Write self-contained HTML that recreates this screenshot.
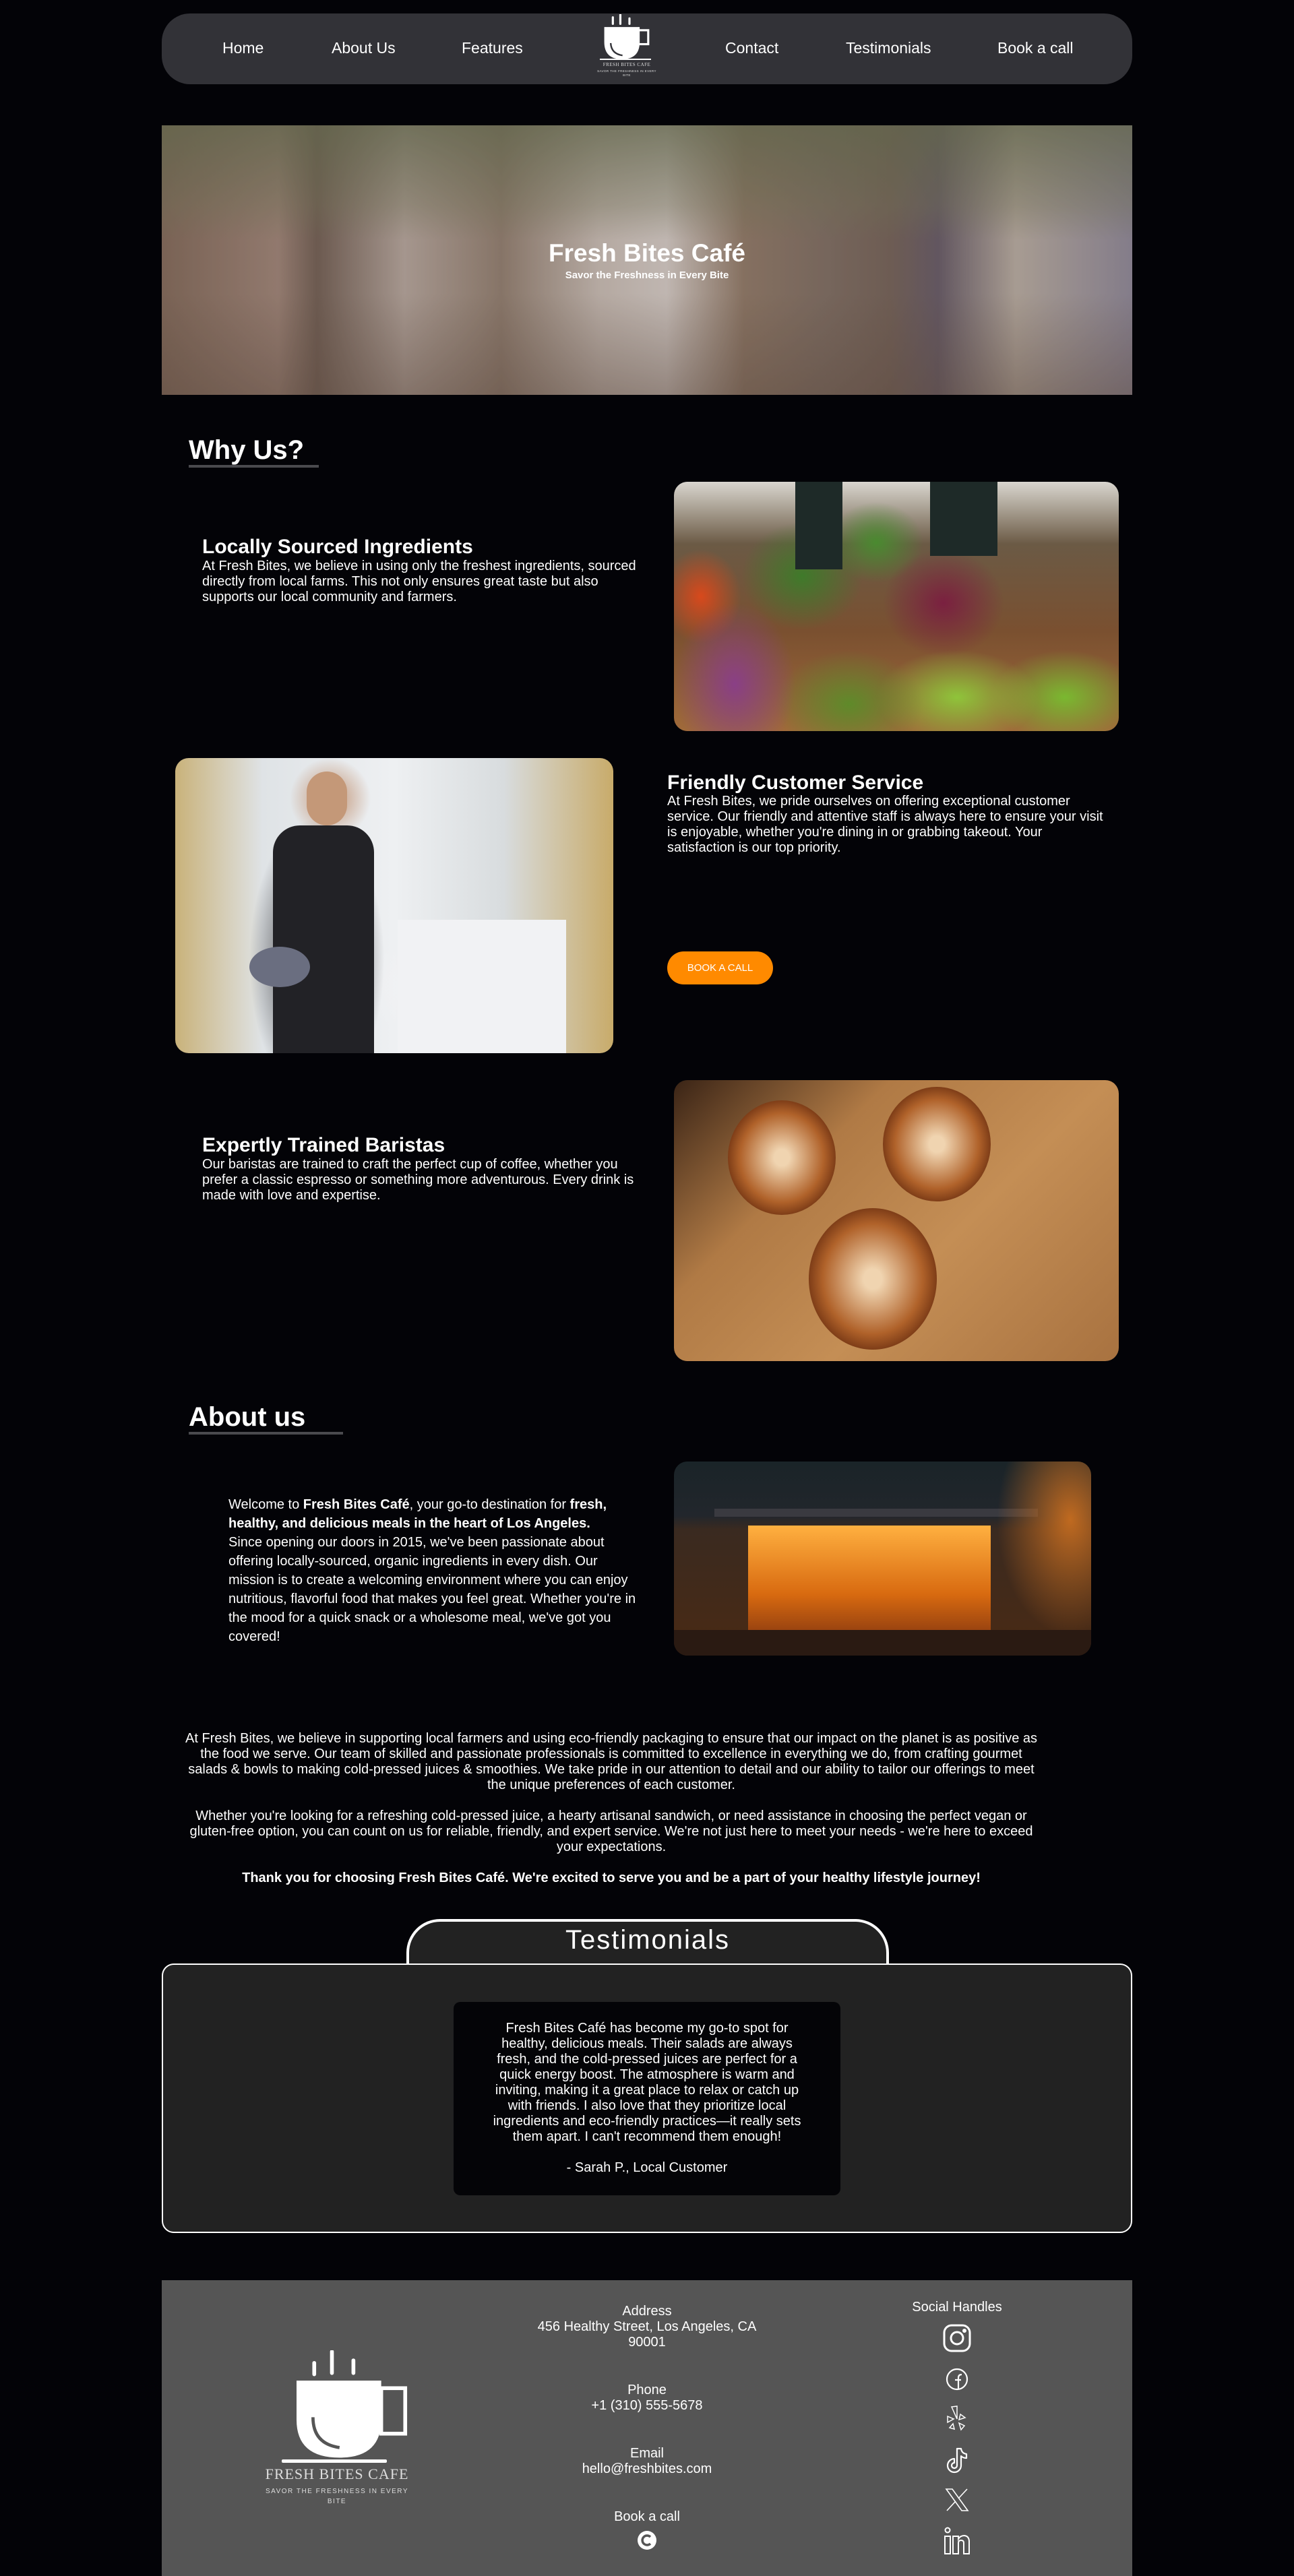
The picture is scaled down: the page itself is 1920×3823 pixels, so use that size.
<!DOCTYPE html>
<html><head><meta charset="utf-8">
<style>
*{margin:0;padding:0;box-sizing:border-box}
body{width:1920px;height:3823px;background:#030307;font-family:"Liberation Sans",Arial,sans-serif;color:#fff;position:relative;overflow:hidden}
.a{position:absolute}
.nav{left:240px;top:20px;width:1440px;height:105px;background:#323237;border-radius:42px}
.nl{position:absolute;top:56px;font-size:23px;line-height:30px;color:#fff}
h2.sec{position:absolute;left:280px;font-size:40px;font-weight:bold;line-height:46px}
.ul{position:absolute;left:280px;height:4px;background:#4a4a4e}
.ft{position:absolute;font-size:30px;font-weight:bold;line-height:36px}
.fp{position:absolute;font-size:20px;line-height:23px;width:700px;white-space:nowrap}
.img{position:absolute;border-radius:20px;overflow:hidden}
.c{text-align:center}
</style></head><body>

<!-- NAV -->
<div class="a nav">
  <span class="nl" style="left:90px;top:36px">Home</span>
  <span class="nl" style="left:252px;top:36px">About Us</span>
  <span class="nl" style="left:445px;top:36px">Features</span>
  <span class="nl" style="left:836px;top:36px">Contact</span>
  <span class="nl" style="left:1015px;top:36px">Testimonials</span>
  <span class="nl" style="left:1240px;top:36px">Book a call</span>
</div>
<svg class="a" style="left:890px;top:21px" width="80" height="70" viewBox="0 0 100 88">
  <g stroke="#fff" stroke-width="4" stroke-linecap="round" fill="none"><line x1="24" y1="6" x2="24" y2="18"/><line x1="38" y1="1" x2="38" y2="18"/><line x1="55" y1="8" x2="55" y2="18"/><rect x="72" y="30" width="18" height="26"/></g>
  <path d="M8 24 H74 V52 Q74 84 41 84 Q8 84 8 52 Z" fill="#fff"/>
  <path d="M20 54 Q21 74 42 77" stroke="#323237" stroke-width="3" fill="none"/>
</svg>
<div class="a" style="left:890px;top:87px;width:76px;height:2px;background:#fff"></div>
<div class="a c" style="left:870px;top:92px;width:120px;font-family:'Liberation Serif',serif;font-size:7px;color:#ddd;letter-spacing:.5px">FRESH BITES CAFE</div>
<div class="a c" style="left:885px;top:103px;width:90px;font-size:4.5px;color:#ddd;letter-spacing:.4px;line-height:6px">SAVOR THE FRESHNESS IN EVERY BITE</div>

<!-- HERO -->
<div class="a" style="left:240px;top:186px;width:1440px;height:400px;overflow:hidden;background:linear-gradient(90deg,#7d6552 0%,#9c8272 12%,#6c5a4c 16%,#b5a79b 25%,#8e7c6a 35%,#c9bfb4 45%,#d7d0c8 52%,#8c7660 60%,#7a6a5c 68%,#6e5d50 75%,#5f5560 80%,#b8aea0 88%,#8a8696 100%)">
  <div class="a" style="left:0;top:0;width:1440px;height:170px;background:linear-gradient(180deg,rgba(95,105,70,.75),rgba(110,115,80,.35) 70%,rgba(0,0,0,0))"></div>
  <div class="a" style="left:0;top:250px;width:1440px;height:150px;background:linear-gradient(180deg,rgba(0,0,0,0),rgba(90,70,55,.45))"></div>
  <div class="a" style="left:0;top:0;width:1440px;height:400px;background:rgba(110,90,95,.22)"></div>
  <div class="a c" style="left:0;top:168px;width:1440px;font-size:37px;font-weight:bold;line-height:44px">Fresh Bites Café</div>
  <div class="a c" style="left:0;top:213px;width:1440px;font-size:15px;font-weight:bold;line-height:20px">Savor the Freshness in Every Bite</div>
</div>

<!-- WHY US -->
<h2 class="sec" style="top:645px">Why Us?</h2>
<div class="ul" style="top:690px;width:193px"></div>

<div class="ft" style="left:300px;top:794px">Locally Sourced Ingredients</div>
<div class="fp" style="left:300px;top:829px">At Fresh Bites, we believe in using only the freshest ingredients, sourced<br>directly from local farms. This not only ensures great taste but also<br>supports our local community and farmers.</div>
<div class="img" style="left:1000px;top:715px;width:660px;height:370px;background:
radial-gradient(ellipse 90px 120px at 90px 300px,#8a3f86,transparent),
radial-gradient(ellipse 110px 80px at 260px 330px,#5f8a2a,transparent),
radial-gradient(ellipse 120px 70px at 420px 320px,#8fc43a,transparent),
radial-gradient(ellipse 110px 70px at 580px 320px,#7ab830,transparent),
radial-gradient(ellipse 90px 80px at 400px 180px,#7a2040,transparent),
radial-gradient(ellipse 60px 70px at 40px 170px,#d8491c,transparent),
radial-gradient(ellipse 90px 80px at 190px 140px,#3f7a2a,transparent),
radial-gradient(ellipse 70px 60px at 300px 90px,#4a8a30,transparent),
linear-gradient(180deg,#d9d6cf 0%,#6b5a45 25%,#7a5030 60%,#a06a3a 100%)">
  <div class="a" style="left:180px;top:0;width:70px;height:130px;background:#1e2a28"></div>
  <div class="a" style="left:380px;top:0;width:100px;height:110px;background:#1e2a28"></div>
</div>

<div class="img" style="left:260px;top:1125px;width:650px;height:438px;background:
radial-gradient(ellipse 100px 210px at 210px 300px,#1a1a1e,transparent),
radial-gradient(ellipse 120px 80px at 400px 340px,#f4f4f6,transparent),
radial-gradient(ellipse 60px 60px at 230px 60px,#c09070,transparent),
linear-gradient(90deg,#c9b27a 0%,#dfe3e6 20%,#eef0f2 50%,#d8dcde 75%,#c8ab6a 100%)">
  <div class="a" style="left:145px;top:100px;width:150px;height:338px;background:#222226;border-radius:40px 40px 0 0"></div>
  <div class="a" style="left:195px;top:20px;width:60px;height:80px;background:#c49878;border-radius:30px"></div>
  <div class="a" style="left:110px;top:280px;width:90px;height:60px;background:#6a6e80;border-radius:50%"></div>
  <div class="a" style="left:330px;top:240px;width:250px;height:200px;background:#f1f2f4"></div>
</div>
<div class="ft" style="left:990px;top:1144px">Friendly Customer Service</div>
<div class="fp" style="left:990px;top:1178px">At Fresh Bites, we pride ourselves on offering exceptional customer<br>service. Our friendly and attentive staff is always here to ensure your visit<br>is enjoyable, whether you're dining in or grabbing takeout. Your<br>satisfaction is our top priority.</div>
<div class="a c" style="left:990px;top:1412px;width:157px;height:49px;background:#ff8a00;border-radius:25px;font-size:15px;line-height:49px">BOOK A CALL</div>

<div class="ft" style="left:300px;top:1682px">Expertly Trained Baristas</div>
<div class="fp" style="left:300px;top:1717px">Our baristas are trained to craft the perfect cup of coffee, whether you<br>prefer a classic espresso or something more adventurous. Every drink is<br>made with love and expertise.</div>
<div class="img" style="left:1000px;top:1603px;width:660px;height:417px;background:linear-gradient(135deg,#3a2416 0%,#b07a45 30%,#c48e55 60%,#a87240 100%)">
  <div class="a" style="left:80px;top:30px;width:160px;height:170px;border-radius:50%;background:radial-gradient(#f0d4b0 10%,#b0622a 55%,#7a3a16 72%,#f4f4f4 74%)"></div>
  <div class="a" style="left:310px;top:10px;width:160px;height:170px;border-radius:50%;background:radial-gradient(#f0d4b0 10%,#b0622a 55%,#7a3a16 72%,#f4f4f4 74%)"></div>
  <div class="a" style="left:200px;top:190px;width:190px;height:210px;border-radius:50%;background:radial-gradient(#f0d4b0 10%,#b0622a 55%,#7a3a16 72%,#f4f4f4 74%)"></div>
</div>

<!-- ABOUT -->
<h2 class="sec" style="top:2080px">About us</h2>
<div class="ul" style="top:2125px;width:229px"></div>
<div class="a" style="left:339px;top:2219px;width:700px;font-size:20px;line-height:28px;white-space:nowrap">Welcome to <b>Fresh Bites Café</b>, your go-to destination for <b>fresh,<br>healthy, and delicious meals in the heart of Los Angeles.</b><br>Since opening our doors in 2015, we've been passionate about<br>offering locally-sourced, organic ingredients in every dish. Our<br>mission is to create a welcoming environment where you can enjoy<br>nutritious, flavorful food that makes you feel great. Whether you're in<br>the mood for a quick snack or a wholesome meal, we've got you<br>covered!</div>
<div class="img" style="left:1000px;top:2169px;width:619px;height:288px;background:linear-gradient(180deg,#1a2428 0%,#22262c 28%,#3a2a20 35%,#4a2a14 100%)">
  <div class="a" style="left:110px;top:95px;width:360px;height:170px;background:linear-gradient(180deg,#ffb040,#d86a10 60%,#8a3a10)"></div>
  <div class="a" style="left:60px;top:70px;width:480px;height:12px;background:#3a3a40"></div>
  <div class="a" style="left:460px;top:0;width:160px;height:288px;background:radial-gradient(ellipse at 80% 30%,#c06a20,transparent 60%)"></div>
  <div class="a" style="left:0;top:250px;width:619px;height:38px;background:#2a1a12"></div>
</div>

<div class="a c" style="left:207px;top:2569px;width:1400px;font-size:20px;line-height:23px;white-space:nowrap">At Fresh Bites, we believe in supporting local farmers and using eco-friendly packaging to ensure that our impact on the planet is as positive as<br>the food we serve. Our team of skilled and passionate professionals is committed to excellence in everything we do, from crafting gourmet<br>salads &amp; bowls to making cold-pressed juices &amp; smoothies. We take pride in our attention to detail and our ability to tailor our offerings to meet<br>the unique preferences of each customer.<br><br>Whether you're looking for a refreshing cold-pressed juice, a hearty artisanal sandwich, or need assistance in choosing the perfect vegan or<br>gluten-free option, you can count on us for reliable, friendly, and expert service. We're not just here to meet your needs - we're here to exceed<br>your expectations.<br><br><b>Thank you for choosing Fresh Bites Café. We're excited to serve you and be a part of your healthy lifestyle journey!</b></div>

<!-- TESTIMONIALS -->
<div class="a" style="left:603px;top:2848px;width:716px;height:80px;background:#222;border:4px solid #fff;border-bottom:none;border-radius:50px 50px 0 0"></div>
<div class="a c" style="left:603px;top:2856px;width:716px;font-size:40px;line-height:46px;letter-spacing:2px">Testimonials</div>
<div class="a" style="left:240px;top:2914px;width:1440px;height:400px;background:#222;border:2px solid #fff;border-radius:18px"></div>
<div class="a c" style="left:673px;top:2971px;width:574px;height:287px;background:#040407;border-radius:10px;padding-top:28px;font-size:20px;line-height:23px;white-space:nowrap">Fresh Bites Café has become my go-to spot for<br>healthy, delicious meals. Their salads are always<br>fresh, and the cold-pressed juices are perfect for a<br>quick energy boost. The atmosphere is warm and<br>inviting, making it a great place to relax or catch up<br>with friends. I also love that they prioritize local<br>ingredients and eco-friendly practices—it really sets<br>them apart. I can't recommend them enough!<br><br>- Sarah P., Local Customer</div>

<!-- FOOTER -->
<div class="a" style="left:240px;top:3384px;width:1440px;height:439px;background:#555"></div>
<svg class="a" style="left:420px;top:3488px" width="190" height="165" viewBox="0 0 100 88">
  <g stroke="#fff" stroke-width="3" stroke-linecap="round" fill="none"><line x1="24" y1="10" x2="24" y2="19"/><line x1="38" y1="1" x2="38" y2="18"/><line x1="55" y1="8" x2="55" y2="18"/><rect x="77" y="30" width="19" height="36"/></g>
  <path d="M10 24 H77 V55 Q77 85 44 85 Q10 85 10 55 Z" fill="#fff"/>
  <path d="M23 53 Q23 74 44 77" stroke="#555" stroke-width="2.5" fill="none"/>
</svg>
<div class="a" style="left:418px;top:3650px;width:156px;height:5px;background:#fff;border-radius:2px"></div>
<div class="a c" style="left:380px;top:3659px;width:240px;font-family:'Liberation Serif',serif;font-size:22px;line-height:26px;color:#ddd;letter-spacing:1px">FRESH BITES CAFE</div>
<div class="a c" style="left:380px;top:3690px;width:240px;font-size:10px;line-height:15px;color:#ddd;letter-spacing:1.5px">SAVOR THE FRESHNESS IN EVERY BITE</div>

<div class="a c" style="left:760px;top:3419px;width:400px;font-size:20px;line-height:23px">Address<br>456 Healthy Street, Los Angeles, CA<br>90001</div>
<div class="a c" style="left:760px;top:3536px;width:400px;font-size:20px;line-height:23px">Phone<br>+1 (310) 555-5678</div>
<div class="a c" style="left:760px;top:3630px;width:400px;font-size:20px;line-height:23px">Email<br>hello@freshbites.com</div>
<div class="a c" style="left:760px;top:3724px;width:400px;font-size:20px;line-height:23px">Book a call</div>
<svg class="a" style="left:945px;top:3755px" width="30" height="30" viewBox="0 0 30 30"><circle cx="15" cy="15" r="14" fill="#fff"/><path d="M20 10 A7 7 0 1 0 20 20" stroke="#555" stroke-width="3.5" fill="none"/></svg>

<div class="a c" style="left:1320px;top:3413px;width:200px;font-size:20px;line-height:23px">Social Handles</div>
<svg class="a" style="left:1399px;top:3449px" width="42" height="42" viewBox="0 0 42 42" fill="none" stroke="#fff" stroke-width="3"><rect x="2" y="2" width="38" height="38" rx="11"/><circle cx="21" cy="21" r="9"/><circle cx="32" cy="10" r="1.5" fill="#fff"/></svg>
<svg class="a" style="left:1403px;top:3514px" width="34" height="34" viewBox="0 0 34 34" fill="none" stroke="#fff" stroke-width="2.2"><circle cx="17" cy="17" r="15"/><path d="M19 32 V15 Q19 10 24 10 M14 18 H23"/></svg>
<svg class="a" style="left:1403px;top:3570px" width="34" height="40" viewBox="0 0 34 40" fill="none" stroke="#fff" stroke-width="1.5"><path d="M9 2 L17 1 L17 20 Z"/><path d="M3 16 L12 20 L3 25 Z"/><path d="M22 13 L29 18 L20 21 Z"/><path d="M11 27 L13 35 L6 33 Z"/><path d="M20 26 L28 30 L23 36 Z"/></svg>
<svg class="a" style="left:1404px;top:3632px" width="32" height="40" viewBox="0 0 32 40" fill="none" stroke="#fff" stroke-width="2.2" stroke-linejoin="round"><path d="M16 2 H22 Q23 9 30 10 V16 Q25 16 22 13 V27 A10 10 0 1 1 12 17 V23 A4 4 0 1 0 16 27 Z"/></svg>
<svg class="a" style="left:1402px;top:3692px" width="36" height="36" viewBox="0 0 36 36" fill="none" stroke="#fff" stroke-width="1.6"><path d="M2 2 H11 L34 34 H25 Z"/><path d="M33 2 L20 16 M3 34 L16 20"/></svg>
<svg class="a" style="left:1400px;top:3750px" width="40" height="42" viewBox="0 0 40 42" fill="none" stroke="#fff" stroke-width="2"><circle cx="6" cy="5" r="3.5"/><rect x="2" y="14" width="8" height="26"/><path d="M14 14 H22 V18 Q25 13 31 13 Q38 14 38 22 V40 H30 V24 Q30 20 26 20 Q22 20 22 24 V40 H14 Z"/></svg>

</body></html>
